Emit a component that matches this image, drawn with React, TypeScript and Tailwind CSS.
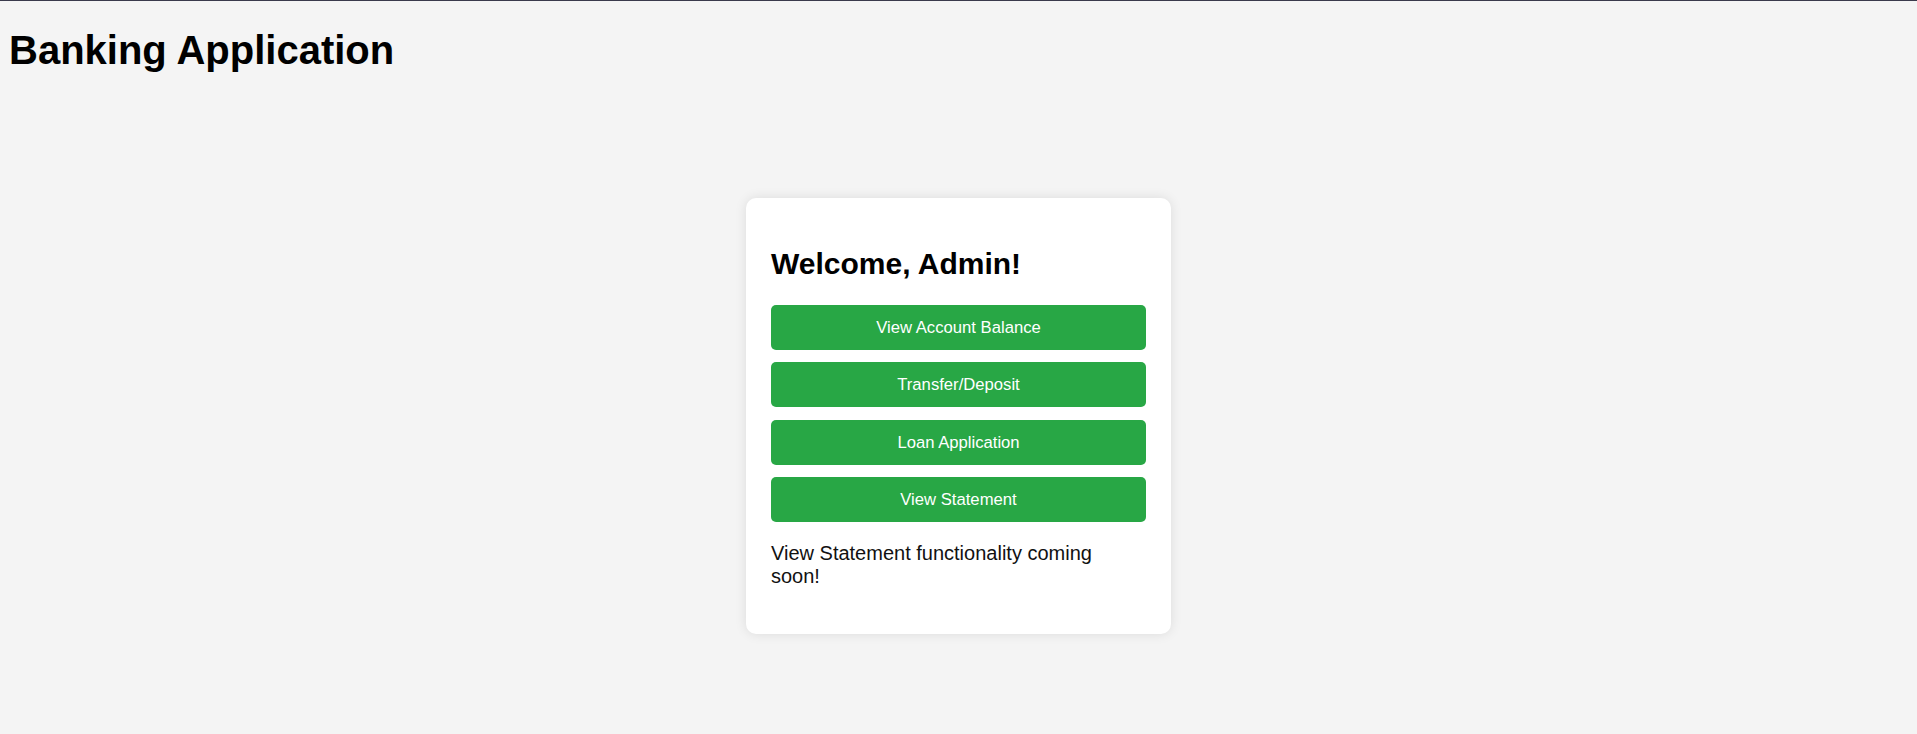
import React from "react";

export default function App() {
  const buttons = ["View Account Balance", "Transfer/Deposit", "Loan Application", "View Statement"];
  return (
    <div className="min-h-[734px] bg-[#f4f4f4] border-t border-[#3a3a4c] font-['Liberation_Sans',Arial,sans-serif] text-black">
      <div className="px-[9px]">
        <h1 className="text-[40px] font-bold leading-[46px] pt-[26px] m-0">Banking Application</h1>
        <div className="flex justify-center pt-[125px]">
          <div className="w-[425px] bg-white rounded-[10px] shadow-[0_0_12px_rgba(0,0,0,0.1)] p-[25px]">
            <h2 className="text-[30px] font-bold leading-[34.5px] mt-[24px] mb-[23px]">Welcome, Admin!</h2>
            <div className="flex flex-col gap-[12.5px]">
              {buttons.map((b) => (
                <button
                  key={b}
                  className="w-full h-[45px] bg-[#28a745] text-white text-[16.67px] rounded-[5px] flex items-center justify-center"
                >
                  {b}
                </button>
              ))}
            </div>
            <p className="text-[20px] leading-[23px] text-[#111] mt-[20px] mb-[21px] pr-[40px]">
              View Statement functionality coming soon!
            </p>
          </div>
        </div>
      </div>
    </div>
  );
}
